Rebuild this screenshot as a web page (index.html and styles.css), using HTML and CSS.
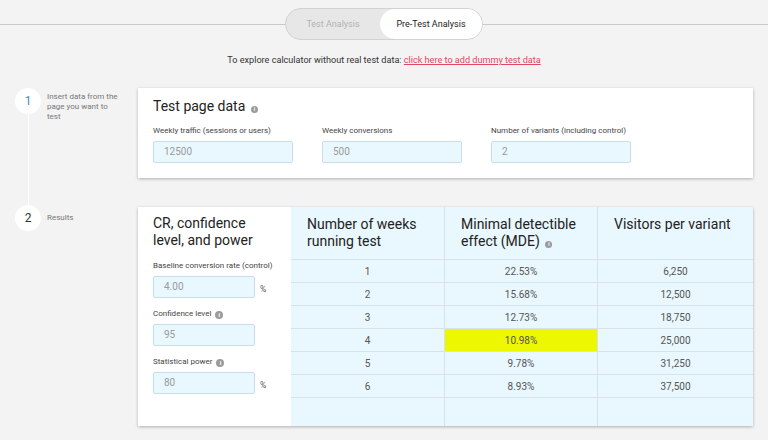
FILE: index.html
```html
<!DOCTYPE html>
<html>
<head>
<meta charset="utf-8">
<link rel="stylesheet" href="styles.css">
</head>
<body>
<div class="topbar">
  <span class="rule"></span>
  <div class="toggle">
    <span class="tab">Test Analysis</span>
    <span class="tab active">Pre-Test Analysis</span>
  </div>
  <span class="rule"></span>
</div>
<p class="hint">To explore calculator without real test data: <a href="#">click here to add dummy test data</a></p>

<div class="steps">
  <div class="step step-first">
    <div class="marker"><span class="num num-blue">1</span><span class="line"></span></div>
    <div class="step-label">Insert data from the page you want to test</div>
    <div class="card card-data">
      <h2 class="card-title">Test page data <span class="info info-sm">i</span></h2>
      <div class="fields">
        <div class="field">
          <label class="label">Weekly traffic (sessions or users)</label>
          <div class="input">12500</div>
        </div>
        <div class="field">
          <label class="label">Weekly conversions</label>
          <div class="input">500</div>
        </div>
        <div class="field">
          <label class="label">Number of variants (including control)</label>
          <div class="input">2</div>
        </div>
      </div>
    </div>
  </div>

  <div class="step">
    <div class="marker"><span class="num">2</span></div>
    <div class="step-label step-label-2">Results</div>
    <div class="card card-results">
      <div class="side">
        <h2 class="card-title side-title">CR, confidence level, and power</h2>
        <div class="sfield">
          <label class="label">Baseline conversion rate (control)</label>
          <div class="inrow"><div class="input input-sm">4.00</div><span class="unit">%</span></div>
        </div>
        <div class="sfield">
          <label class="label">Confidence level <span class="info">i</span></label>
          <div class="inrow"><div class="input input-sm">95</div></div>
        </div>
        <div class="sfield">
          <label class="label">Statistical power <span class="info">i</span></label>
          <div class="inrow"><div class="input input-sm">80</div><span class="unit">%</span></div>
        </div>
      </div>
      <div class="table">
        <div class="cell head">Number of weeks running test</div>
        <div class="cell head">Minimal detectible effect (MDE) <span class="info info-sm">i</span></div>
        <div class="cell head last">Visitors per variant</div>

        <div class="cell">1</div><div class="cell">22.53%</div><div class="cell last">6,250</div>
        <div class="cell">2</div><div class="cell">15.68%</div><div class="cell last">12,500</div>
        <div class="cell">3</div><div class="cell">12.73%</div><div class="cell last">18,750</div>
        <div class="cell">4</div><div class="cell hl">10.98%</div><div class="cell last">25,000</div>
        <div class="cell">5</div><div class="cell">9.78%</div><div class="cell last">31,250</div>
        <div class="cell">6</div><div class="cell">8.93%</div><div class="cell last">37,500</div>

        <div class="cell end"></div><div class="cell end"></div><div class="cell end last"></div>
      </div>
    </div>
  </div>
</div>
</body>
</html>
```
FILE: styles.css
```css
* { box-sizing: border-box; }
html, body { margin: 0; padding: 0; }
body {
  width: 768px;
  height: 440px;
  overflow: hidden;
  background: #f3f3f3;
  font-family: Roboto, "Liberation Sans", sans-serif;
  color: #333;
}

.topbar {
  display: flex;
  align-items: center;
  margin-top: 8px;
  height: 32px;
}
.rule { flex: 1; height: 1px; background: #c9c9c9; }
.toggle {
  width: 198px;
  height: 32px;
  display: flex;
  background: #e7e7e7;
  border: 1px solid #d2d2d2;
  border-radius: 16px;
}
.tab {
  display: flex;
  align-items: center;
  justify-content: center;
  font-size: 9px;
  color: #b3b3b3;
  flex: 0 0 94px;
}
.tab.active {
  flex: 1;
  background: #fff;
  color: #222;
  border-radius: 16px;
}

.hint {
  margin: 14px 0 0;
  text-align: center;
  font-size: 9.1px;
  line-height: 12px;
  color: #333;
}
.hint a { color: #e0485f; text-decoration: underline; }

.steps { margin-top: 22px; }
.step {
  display: grid;
  grid-template-columns: 26px 97px 615px;
  padding-left: 15px;
  align-items: start;
}
.step-first { padding-bottom: 29px; align-items: stretch; }
.step-first .card { align-self: start; }
.marker {
  display: flex;
  flex-direction: column;
  align-items: center;
}
.step:not(.step-first) .marker { margin-top: -2px; }
.num {
  width: 26px;
  height: 26px;
  border-radius: 50%;
  background: #fff;
  display: flex;
  align-items: center;
  justify-content: center;
  font-size: 12px;
  color: #333;
}
.num-blue { color: #4a8ab5; }
.line { flex: 1; width: 1px; background: #fff; margin-bottom: -31px; }
.step-label {
  width: 82px;
  padding: 4px 0 0 6px;
  font-size: 8px;
  line-height: 10px;
  color: #777;
}
.step-label-2 { padding-top: 6px; }

.card {
  background: #fff;
  box-shadow: 0 1px 3px rgba(0,0,0,0.28);
}
.card-data { padding: 8px 15px 15px; }
.card-title {
  margin: 0;
  font-size: 14px;
  line-height: 20px;
  font-weight: 400;
  color: #222;
}
.fields { display: flex; gap: 29px; margin-top: 9px; }
.field { width: 140px; }
.label {
  display: block;
  font-size: 8px;
  line-height: 12px;
  color: #444;
  margin-bottom: 4px;
  white-space: nowrap;
}
.input {
  height: 22px;
  background: #e9f7fe;
  border: 1px solid #c9dde8;
  border-radius: 2px;
  padding-left: 10px;
  font-size: 10px;
  line-height: 20px;
  color: #9a9a9a;
}

.info {
  display: inline-block;
  width: 8px;
  height: 8px;
  border-radius: 50%;
  background: #9b9b9b;
  color: #fff;
  font-size: 6px;
  line-height: 8px;
  text-align: center;
  font-weight: 700;
  vertical-align: -1px;
  margin-left: 2px;
}
.info-sm { width: 7px; height: 7px; font-size: 5px; line-height: 7px; vertical-align: 0; }

.card-results {
  display: grid;
  grid-template-columns: 153px 1fr;
  height: 219px;
}
.side { padding: 8px 15px 0; }
.side-title { line-height: 17px; margin-bottom: 11px; }
.sfield { margin-bottom: 10px; }
.inrow { display: flex; align-items: center; }
.input-sm { width: 102px; }
.unit { font-size: 8.5px; color: #555; margin-left: 5px; padding-top: 4px; }

.table {
  display: grid;
  grid-template-columns: 154px 153px 1fr;
  grid-template-rows: 53px repeat(6, 23px) 1fr;
  background: #e9f7fe;
}
.cell {
  border-right: 1px solid #d8e3e8;
  border-bottom: 1px solid #d8e3e8;
  font-size: 10px;
  color: #555;
  display: flex;
  align-items: center;
  justify-content: center;
}
.cell.last { border-right: none; }
.cell.end { border-bottom: none; }
.cell.head {
  display: block;
  padding: 9px 12px 0 16px;
  font-size: 14px;
  line-height: 17px;
  color: #222;
}
.cell.hl { background: #ecf700; color: #555; }
```
